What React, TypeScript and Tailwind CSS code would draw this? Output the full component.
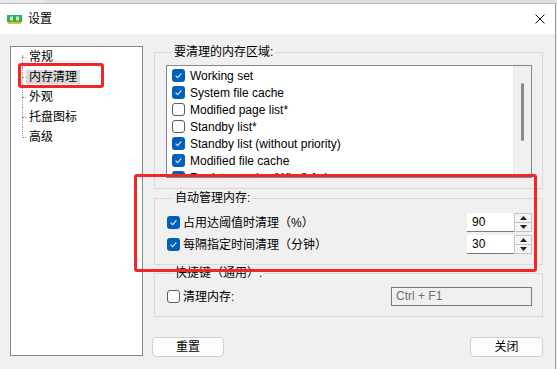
import React from 'react';

const font = 'font-["Liberation_Sans","Noto_Sans_CJK_SC",sans-serif]';

function Check({ on }: { on: boolean }) {
  if (on) {
    return (
      <span className="w-[13px] h-[13px] shrink-0 rounded-[3px] bg-[#005fb8] flex items-center justify-center">
        <svg width="9" height="9" viewBox="0 0 9 9">
          <path d="M1.6 4.7 L3.6 6.6 L7.4 2.4" stroke="#dfe9f5" strokeWidth="1.1" fill="none" />
        </svg>
      </span>
    );
  }
  return <span className="w-[13px] h-[13px] shrink-0 rounded-[3px] bg-white border border-[#5c5c5c]" />;
}

function Spin({ value }: { value: string }) {
  return (
    <div className="flex w-[65px] h-[19px]">
      <div className="flex-1 bg-white border-b border-[#7a7a7a] pl-[5px] text-[12px] leading-[18px]">{value}</div>
      <div className="w-[18px] flex flex-col border border-[#c4c4c4] bg-[#f4f4f4]">
        <div className="flex-1 flex items-center justify-center border-b border-[#c4c4c4]">
          <svg width="7" height="4" viewBox="0 0 7 4"><path d="M0 4 L3.5 0 L7 4 Z" fill="#222" /></svg>
        </div>
        <div className="flex-1 flex items-center justify-center">
          <svg width="7" height="4" viewBox="0 0 7 4"><path d="M0 0 L3.5 4 L7 0 Z" fill="#222" /></svg>
        </div>
      </div>
    </div>
  );
}

const treeItems = ['常规', '内存清理', '外观', '托盘图标', '高级'];

const areas: [string, boolean][] = [
  ['Working set', true],
  ['System file cache', true],
  ['Modified page list*', false],
  ['Standby list*', false],
  ['Standby list (without priority)', true],
  ['Modified file cache', true],
  ['Registry cache (Win 8.1+)', true],
];

export default function App() {
  return (
    <div className={`relative w-[557px] h-[369px] overflow-hidden bg-[#e9e9e9] text-black ${font}`}>
      {/* strip of the desktop above the window */}
      <div className="h-[4px] flex border-b border-[#b9b9b9]">
        <div className="w-[45px]" />
        <div className="flex-1 bg-[#dedede]" />
      </div>

      <div className="w-[556px] h-[365px] bg-[#f0f0f0] border-r border-[#9a9a9a] flex flex-col">
        {/* title bar */}
        <div className="h-[30px] bg-white flex items-center shrink-0">
          <svg className="ml-[7px]" width="15" height="10" viewBox="0 0 15 10">
            <rect x="0" y="1" width="15" height="7" fill="#2fb34a" />
            <rect x="3" y="2.5" width="3" height="4" fill="#d9d9d9" />
            <rect x="9" y="2.5" width="3" height="4" fill="#d9d9d9" />
            <rect x="1" y="8" width="13" height="2" fill="#e3c51c" />
          </svg>
          <span className="ml-[6px] text-[12px] leading-[16px]">设置</span>
          <svg className="ml-auto mr-[10px]" width="10" height="10" viewBox="0 0 10 10">
            <path d="M0.5 0.5 L9.5 9.5 M9.5 0.5 L0.5 9.5" stroke="#111" strokeWidth="1" />
          </svg>
        </div>

        <div className="flex items-start pl-[10px] pt-[10px]">
          {/* tree */}
          <div className="mt-[2px] w-[133px] h-[310px] bg-white border border-[#828790] pl-[11px]">
            {treeItems.map((t, i) => (
              <div key={t} className="h-[20px] flex items-center">
                <div className="relative w-[4px] h-full">
                  <div
                    className={`absolute left-0 border-l border-dotted border-[#9a9a9a] ${
                      i === 0 ? 'top-[8px] bottom-0' : i === treeItems.length - 1 ? 'top-0 h-[11px]' : 'top-0 bottom-0'
                    }`}
                  />
                  <div className="absolute left-0 top-[10px] w-[4px] border-t border-dotted border-[#9a9a9a]" />
                </div>
                <span
                  className={`px-[3px] text-[12px] leading-[14px] ${i === 1 ? 'bg-[#d9d9d9]' : ''}`}
                >
                  {t}
                </span>
              </div>
            ))}
          </div>

          {/* settings */}
          <div className="ml-[11px] w-[389px] flex flex-col">
            <fieldset className="border border-[#d9d9d9] pl-[11px] pr-[10px] pb-[10px]">
              <legend className="ml-[6px] px-[2px] text-[12px] leading-[16px]">要清理的内存区域:</legend>
              <div className="mt-[5px] h-[113px] bg-white border border-[#828790] flex overflow-hidden">
                <div className="flex-1 pl-[5px] pt-[1px] overflow-hidden">
                  {areas.map(([name, on]) => (
                    <div key={name} className="h-[17px] flex items-center gap-[5px]">
                      <Check on={on} />
                      <span className="text-[12px] leading-[14px] whitespace-nowrap">{name}</span>
                    </div>
                  ))}
                </div>
                <div className="w-[18px] bg-[#f0f0f0] border-l border-[#e3eaf3] flex justify-center pt-[17px]">
                  <div className="w-[3px] h-[58px] rounded-full bg-[#8a8a8a]" />
                </div>
              </div>
            </fieldset>

            <fieldset className="mt-[1px] border border-[#d9d9d9] pl-[12px] pr-[10px] pb-[10px]">
              <legend className="ml-[6px] px-[2px] text-[12px] leading-[16px]">自动管理内存:</legend>
              <div className="mt-[7px] flex flex-col gap-[3px]">
                <div className="h-[19px] flex items-center">
                  <Check on />
                  <span className="ml-[3px] text-[12px] leading-[14px]">占用达阈值时清理（%）</span>
                  <div className="ml-auto"><Spin value="90" /></div>
                </div>
                <div className="h-[19px] flex items-center">
                  <Check on />
                  <span className="ml-[3px] text-[12px] leading-[14px]">每隔指定时间清理（分钟）</span>
                  <div className="ml-auto"><Spin value="30" /></div>
                </div>
              </div>
            </fieldset>

            <fieldset className="border border-[#d9d9d9] pl-[12px] pr-[10px] pb-[10px]">
              <legend className="ml-[6px] px-[2px] text-[12px] leading-[16px]">快捷键（通用）:</legend>
              <div className="mt-[6px] h-[19px] flex items-center">
                <Check on={false} />
                <span className="ml-[3px] text-[12px] leading-[14px]">清理内存:</span>
                <div className="ml-auto w-[141px] h-[19px] border border-[#7a7a7a] bg-[#f0f0f0] pl-[4px] text-[12px] leading-[17px] text-[#6d6d6d]">
                  Ctrl + F1
                </div>
              </div>
            </fieldset>

            <div className="mt-[20px] -ml-[2px] flex justify-between">
              <button className="w-[72px] h-[20px] rounded-[4px] border border-[#d0d0d0] bg-[#fdfdfd] text-[12px] leading-[18px]">
                重置
              </button>
              <button className="w-[73px] h-[20px] rounded-[4px] border border-[#d0d0d0] bg-[#fdfdfd] text-[12px] leading-[18px]">
                关闭
              </button>
            </div>
          </div>
        </div>
      </div>

      {/* red annotation marks drawn over the screenshot */}
      <div className="absolute left-[18px] top-[63px] w-[86px] h-[25px] border-[3px] border-[#f52525] rounded-[3px]" />
      <div className="absolute left-[134px] top-[174px] w-[403px] h-[98px] border-[3px] border-[#f52525] rounded-[3px]" />
    </div>
  );
}
